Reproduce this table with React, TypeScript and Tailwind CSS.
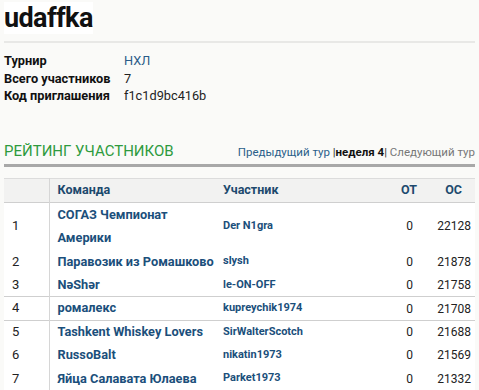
const ROWS = [
  { n: 1, team: ["СОГАЗ Чемпионат", "Америки"], user: "Der N1gra", ot: 0, oc: 22128, line: true },
  { n: 2, team: ["Паравозик из Ромашково"], user: "slysh", ot: 0, oc: 21878, line: false },
  { n: 3, team: ["NəShər"], user: "le-ON-OFF", ot: 0, oc: 21758, line: false },
  { n: 4, team: ["ромалекс"], user: "kupreychik1974", ot: 0, oc: 21708, line: true },
  { n: 5, team: ["Tashkent Whiskey Lovers"], user: "SirWalterScotch", ot: 0, oc: 21688, line: true },
  { n: 6, team: ["RussoBalt"], user: "nikatin1973", ot: 0, oc: 21569, line: false },
  { n: 7, team: ["Яйца Салавата Юлаева"], user: "Parket1973", ot: 0, oc: 21332, line: false },
];

export default function App() {
  return (
    <div className="w-[479px] h-[390px] overflow-hidden bg-[#fafaf8] px-[4px] font-['Roboto',sans-serif] text-[#222]">
      <h1 className="pt-[1px] text-[27px] leading-[34px] font-bold tracking-[-0.6px] text-[#111]">
        <span className="bg-white">udaffka</span>
      </h1>
      <div className="mt-[6px] h-[2px] bg-[#e8e8e6]" />

      <div className="mt-[9px] grid grid-cols-[120px_1fr] text-[12.75px] leading-[17.5px]">
        <span className="font-bold text-[#111]">Турнир</span>
        <span className="text-[#2a5c88]">НХЛ</span>
        <span className="font-bold text-[#111]">Всего участников</span>
        <span>7</span>
        <span className="font-bold text-[#111]">Код приглашения</span>
        <span>f1c1d9bc416b</span>
      </div>

      <div className="mt-[36px] flex items-end justify-between border-b-[3px] border-[#a8a8a8] pb-[3px]">
        <h2 className="text-[15px] leading-[20px] text-[#2e9a3e]">РЕЙТИНГ УЧАСТНИКОВ</h2>
        <div className="text-[11.5px] leading-[16px] text-[#777] pb-[1px]">
          <span className="text-[#2a5f8a]">Предыдущий тур</span>{" "}
          <span className="text-[#333]">|</span>
          <span className="font-bold text-[#111]">неделя 4</span>
          <span className="text-[#333]">|</span> Следующий тур
        </div>
      </div>

      <table className="mt-[11px] w-[471px] table-fixed border-collapse bg-white">
        <colgroup>
          <col className="w-[45px]" />
          <col className="w-[166px]" />
          <col className="w-[170px]" />
          <col className="w-[36px]" />
          <col className="w-[54px]" />
        </colgroup>
        <thead>
          <tr className="bg-[#f2f2f1] border-t border-[#dcdcdc] text-[12.5px] font-bold text-[#1d4a6e]">
            <th className="h-[24px] border-r border-[#d6d6d6]" />
            <th className="px-[8px] text-left">Команда</th>
            <th className="px-[8px] text-left">Участник</th>
            <th className="pr-[4px] text-right">ОТ</th>
            <th className="pr-[13px] text-right">ОС</th>
          </tr>
        </thead>
        <tbody>
          {ROWS.map((r) => (
            <tr key={r.n} className={r.line ? "border-t border-[#cfcfcf]" : "border-t border-transparent"}>
              <td className="border-r border-[#d6d6d6] pl-[8px] text-[13px] text-[#222] leading-[22.4px]">{r.n}</td>
              <td className={`pl-[8px] pr-0 whitespace-nowrap text-[12.75px] font-bold text-[#1b4f7b] ${r.n === 1 ? "leading-[23.5px]" : "leading-[22.4px]"}`}>
                {r.team.map((t, i) => (
                  <div key={i}>{t}</div>
                ))}
              </td>
              <td className="px-[8px] text-[11px] font-bold text-[#1b4f7b]">{r.user}</td>
              <td className="pr-[8px] text-right text-[12px] text-[#222]">{r.ot}</td>
              <td className="pr-[4px] text-right text-[12px] text-[#222]">{r.oc}</td>
            </tr>
          ))}
        </tbody>
      </table>
    </div>
  );
}
